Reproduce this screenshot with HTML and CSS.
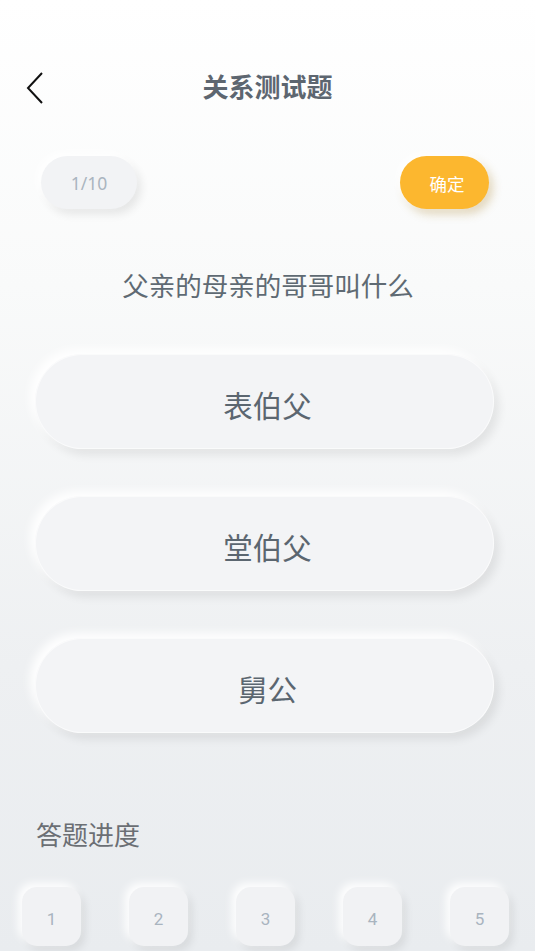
FILE: index.html
```html
<!DOCTYPE html>
<html lang="zh">
<head>
<meta charset="utf-8">
<link rel="stylesheet" href="styles.css">
</head>
<body>
<div class="page">
  <header class="header">
    <span class="back">
      <svg width="20" height="32" viewBox="0 0 20 32"><path d="M17 1 L3 16 L17 31" fill="none" stroke="#111" stroke-width="2"/></svg>
    </span>
    <h1 class="title">关系测试题</h1>
  </header>
  <div class="toprow">
    <div class="counter">1/10</div>
    <div class="confirm">确定</div>
  </div>
  <p class="question">父亲的母亲的哥哥叫什么</p>
  <div class="options">
    <div class="option">表伯父</div>
    <div class="option">堂伯父</div>
    <div class="option">舅公</div>
  </div>
  <h2 class="progress-title">答题进度</h2>
  <div class="progress">
    <div class="num">1</div>
    <div class="num">2</div>
    <div class="num">3</div>
    <div class="num">4</div>
    <div class="num">5</div>
  </div>
</div>
</body>
</html>
```
FILE: styles.css
```css
* { box-sizing: border-box; }
html, body { margin: 0; padding: 0; }
body {
  width: 535px;
  height: 951px;
  overflow: hidden;
  font-family: "Noto Sans CJK SC", "Noto Sans", sans-serif;
  background: linear-gradient(180deg, #ffffff 0%, #f9fafa 30%, #eef0f2 70%, #e9ecef 100%);
}
.page { display: flex; flex-direction: column; }
.header {
  position: relative;
  height: 56px;
  margin-top: 60px;
  display: flex;
  align-items: center;
  justify-content: center;
}
.back {
  position: absolute;
  left: 25px;
  top: 12px;
  display: flex;
}
.title {
  margin: 0;
  font-size: 26px;
  line-height: 36px;
  font-weight: 700;
  color: #5d6670;
  margin-top: -4px;
}
.toprow {
  display: flex;
  justify-content: space-between;
  padding: 0 46px 0 41px;
  margin-top: 40px;
}
.counter {
  width: 96px;
  height: 53px;
  border-radius: 27px;
  background: #f2f3f5;
  box-shadow: -4px -4px 8px rgba(255,255,255,0.9), 4px 5px 10px rgba(0,0,0,0.09);
  display: flex; align-items: center; justify-content: center;
  font-family: "Noto Sans", sans-serif;
  font-size: 17.5px;
  color: #aab5c0;
}
.confirm {
  width: 89px;
  height: 53px;
  border-radius: 27px;
  background: #fcb72f;
  box-shadow: -3px -3px 7px rgba(255,255,255,0.9), 4px 5px 10px rgba(170,130,40,0.3);
  display: flex; align-items: center; justify-content: center;
  padding-left: 5px;
  padding-top: 2px;
  font-size: 17.5px;
  color: #ffffff;
}
.question {
  margin: 58px 0 0 0;
  text-align: center;
  font-size: 26.5px;
  line-height: 36px;
  color: #5f6a73;
  padding-left: 1px;
}
.options {
  display: flex;
  flex-direction: column;
  gap: 47px;
  margin: 51px 41px 0 35px;
}
.option {
  height: 95px;
  border-radius: 48px;
  background: #f3f4f6;
  box-shadow: -5px -5px 10px rgba(255,255,255,0.95), 5px 6px 10px rgba(0,0,0,0.08), inset 0 0 0 1px rgba(255,255,255,0.6);
  display: flex; align-items: center; justify-content: center;
  padding-left: 6px;
  padding-top: 4px;
  font-size: 29.5px;
  color: #5b6670;
}
.progress-title {
  margin: 83px 0 0 36px;
  font-size: 26px;
  font-weight: 400;
  line-height: 36px;
  color: #6b6f74;
}
.progress {
  display: flex;
  gap: 48px;
  padding-left: 22px;
  margin-top: 35px;
}
.num {
  width: 59px;
  height: 59px;
  border-radius: 15px;
  background: #f1f2f4;
  box-shadow: -4px -4px 8px rgba(255,255,255,0.95), 4px 5px 8px rgba(0,0,0,0.08);
  display: flex; align-items: center; justify-content: center;
  font-family: Roboto, sans-serif;
  font-size: 17px;
  color: #a9b4bf;
  padding-top: 4px;
}
```
